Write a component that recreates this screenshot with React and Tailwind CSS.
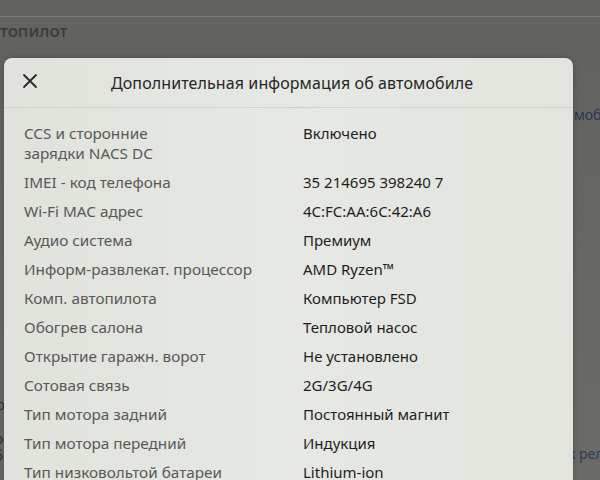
const rows = [
  ["CCS и сторонние\nзарядки NACS DC", "Включено"],
  ["IMEI - код телефона", "35 214695 398240 7"],
  ["Wi-Fi MAC адрес", "4C:FC:AA:6C:42:A6"],
  ["Аудио система", "Премиум"],
  ["Информ-развлекат. процессор", "AMD Ryzen™"],
  ["Комп. автопилота", "Компьютер FSD"],
  ["Обогрев салона", "Тепловой насос"],
  ["Открытие гаражн. ворот", "Не установлено"],
  ["Сотовая связь", "2G/3G/4G"],
  ["Тип мотора задний", "Постоянный магнит"],
  ["Тип мотора передний", "Индукция"],
  ["Тип низковольтой батареи", "Lithium-ion"],
];

export default function App() {
  return (
    <div
      className="relative w-[600px] h-[480px] overflow-hidden bg-gradient-to-b from-[#62635f] to-[#6a6b67]"
      style={{ fontFamily: '"Noto Sans", "Open Sans", sans-serif' }}
    >
      {/* фон: экран настроек под модалкой */}
      <div className="h-[17px] border-b border-[#7b7c78]" />
      <div className="pt-[3px] -ml-[21px] text-[17px] font-medium leading-[22px] text-[#3a3b38] whitespace-nowrap">Автопилот</div>
      <div className="absolute left-[574px] top-[104px] text-[14px] text-[#2c3550] whitespace-nowrap">мобиле</div>
      <div className="absolute left-[568px] top-[443px] text-[14px] text-[#2c3a5a] whitespace-nowrap">к релизу</div>
      <div className="absolute -left-[4px] top-[396px] w-[8px] overflow-hidden text-[15px] leading-[16px] text-[#2e2f2c]">р</div>
      <div className="absolute -left-[6px] top-[430px] w-[10px] overflow-hidden text-[15px] leading-[17px] text-[#2e2f2c]">ро<br />бе</div>

      {/* модальное окно */}
      <div className="absolute left-[4px] top-[58px] w-[569px] h-[440px] rounded-t-[8px] bg-gradient-to-r from-[#e0e2dc] via-[#e6e8e3] to-[#e2e4de] shadow-[0_0_6px_rgba(0,0,0,0.25)]">
        <div className="flex items-center h-[50px] border-b border-[#cfd1cb]">
          <div className="w-[50px] flex justify-center pl-[1px]">
            <svg width="16" height="16" viewBox="0 0 16 16" className="-mt-[4px]">
              <path d="M2 2 L14 14 M14 2 L2 14" stroke="#2a2a2a" strokeWidth="1.8" strokeLinecap="round" />
            </svg>
          </div>
          <div className="pl-[57px] text-[16px] text-[#262626] tracking-[0.1px]">
            Дополнительная информация об автомобиле
          </div>
        </div>
        <div className="pt-[10px] pl-[20px]">
          {rows.map(([label, value]) => (
            <div key={label} className="flex py-[4.5px] leading-[20px]">
              <div className="w-[279px] text-[15.3px] text-[#585956] whitespace-pre-line">{label}</div>
              <div className="text-[15px] text-[#1e1e1e]">{value}</div>
            </div>
          ))}
        </div>
      </div>
    </div>
  );
}
